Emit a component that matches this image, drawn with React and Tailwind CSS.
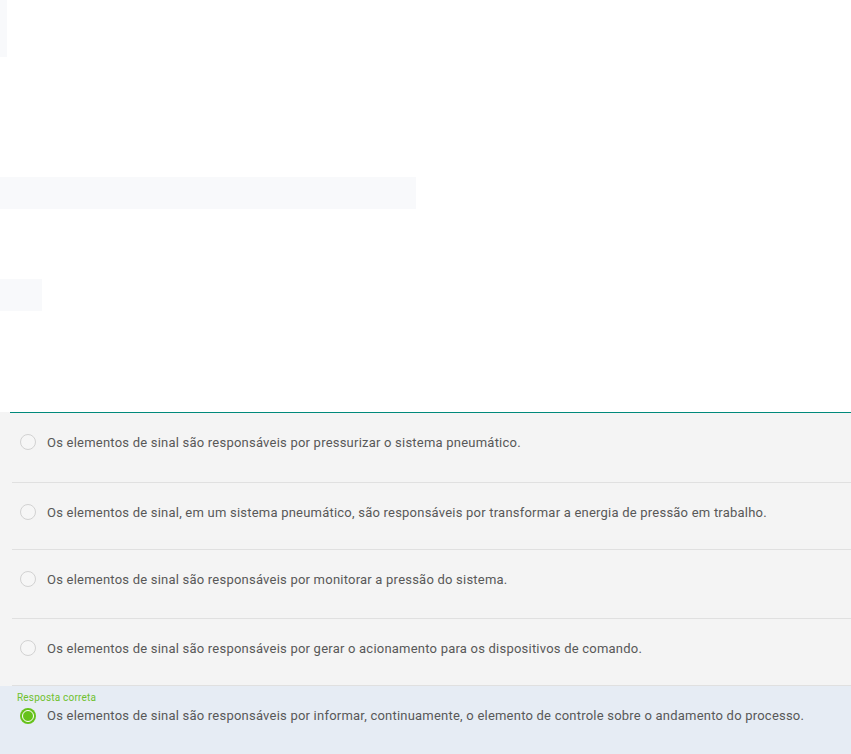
import React from 'react';

const options = [
  { text: 'Os elementos de sinal são responsáveis por pressurizar o sistema pneumático.', h: 'h-[70px]' },
  { text: 'Os elementos de sinal, em um sistema pneumático, são responsáveis por transformar a energia de pressão em trabalho.', h: 'h-[67px]' },
  { text: 'Os elementos de sinal são responsáveis por monitorar a pressão do sistema.', h: 'h-[69px]' },
  { text: 'Os elementos de sinal são responsáveis por gerar o acionamento para os dispositivos de comando.', h: 'h-[67px]' },
];

const correct = 'Os elementos de sinal são responsáveis por informar, continuamente, o elemento de controle sobre o andamento do processo.';

const Radio = ({ checked }) =>
  checked ? (
    <span className="w-4 h-4 rounded-full bg-[#66c21a] flex items-center justify-center shrink-0">
      <span className="w-[12px] h-[12px] rounded-full border-[1.5px] border-white bg-[#66c21a]" />
    </span>
  ) : (
    <span className="w-4 h-4 rounded-full border-[1.5px] border-[#d2d2d2] bg-[#f6f6f6] shrink-0" />
  );

export default function App() {
  return (
    <div className="w-[851px] h-[754px] bg-white overflow-hidden" style={{ fontFamily: 'Roboto, "Noto Sans", sans-serif' }}>
      <div className="h-[412px] flex flex-col">
        <div className="w-[7px] h-[57px] bg-[#f8f9fb]" />
        <div className="w-[416px] h-[32px] bg-[#f8f9fb] mt-[120px]" />
        <div className="w-[42px] h-[32px] bg-[#f8f9fb] mt-[70px]" />
      </div>
      <div className="bg-[#f4f4f4]">
        <div className="ml-[10px] h-px bg-[#00897b]" />
        {options.map((o, i) => (
          <div key={i} className={`${o.h} ml-3 border-b border-[#e0e0e0] flex flex-col`}>
            <div className="h-[21px]" />
            <div className="flex items-center gap-[11px] pl-2 h-4">
              <Radio />
              <span className="text-[13px] leading-4 pt-px text-[#585858] tracking-[0.22px] whitespace-nowrap">{o.text}</span>
            </div>
          </div>
        ))}
      </div>
      <div className="bg-[#e6ecf4] h-[69px] pl-[17px] pt-[5px]">
        <div className="text-[10px] leading-[14px] text-[#6fc12e] tracking-[0.2px]">Resposta correta</div>
        <div className="flex items-center gap-[11px] pl-[3px] mt-[3px] h-4">
          <Radio checked />
          <span className="text-[13px] leading-4 text-[#585858] tracking-[0.22px] whitespace-nowrap">{correct}</span>
        </div>
      </div>
    </div>
  );
}
